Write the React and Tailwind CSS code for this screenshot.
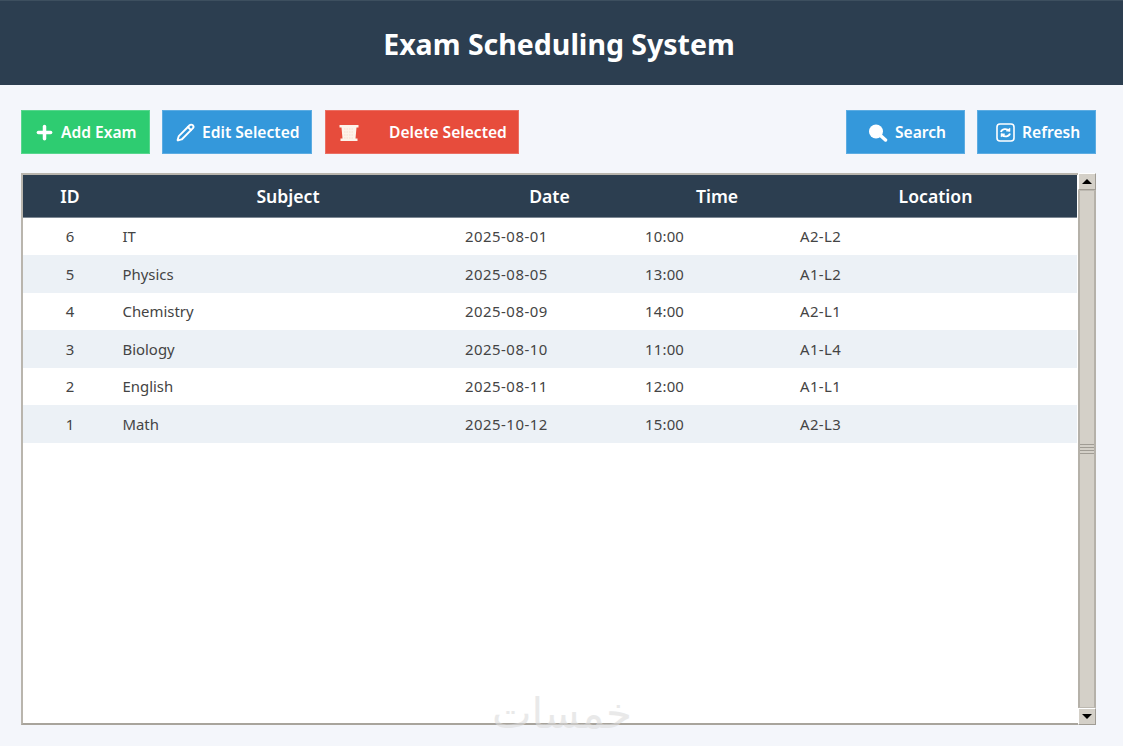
import { Pencil, Plus } from 'lucide-react';

const exams = [
  { id: 6, subject: 'IT', date: '2025-08-01', time: '10:00', location: 'A2-L2' },
  { id: 5, subject: 'Physics', date: '2025-08-05', time: '13:00', location: 'A1-L2' },
  { id: 4, subject: 'Chemistry', date: '2025-08-09', time: '14:00', location: 'A2-L1' },
  { id: 3, subject: 'Biology', date: '2025-08-10', time: '11:00', location: 'A1-L4' },
  { id: 2, subject: 'English', date: '2025-08-11', time: '12:00', location: 'A1-L1' },
  { id: 1, subject: 'Math', date: '2025-10-12', time: '15:00', location: 'A2-L3' },
];

const columns = 'grid grid-cols-[94px_342px_181px_154px_283px]';

function TrashIcon() {
  return (
    <svg width="20" height="18" viewBox="0 0 20 18" fill="#fdf3ea">
      <path d="M0.500 1h19v2.500h-2l-1 11h2v2.500H1.500v-2.500h2l-1-11h-2z" />
      <path d="M5 5h10M5 8h10M5 11h10M5 14h10" stroke="#f6d3c4" strokeWidth="0.700" strokeDasharray="1.500 1" />
    </svg>
  );
}

function SearchIcon() {
  return (
    <svg width="19" height="18" viewBox="0 0 19 18" fill="white">
      <circle cx="7" cy="7.500" r="7" />
      <path d="M11.500 11.500l5 4.500" stroke="white" strokeWidth="3.500" strokeLinecap="round" />
    </svg>
  );
}

function RefreshIcon() {
  return (
    <svg width="19" height="19" viewBox="0 0 19 19" fill="none" stroke="white">
      <rect x="1" y="1" width="17" height="17" rx="3" strokeWidth="1.600" />
      <path d="M5 9a4.500 3.500 0 0 1 8-1.500M14 10.500a4.500 3.500 0 0 1-8 1.500" strokeWidth="1.800" />
      <path d="M10 8l4 0.500 0-3.500zM9 11l-4-0.500 0 3.500z" fill="white" strokeWidth="0.500" />
    </svg>
  );
}

function ToolButton({ className, children }) {
  return (
    <button
      type="button"
      className={`flex h-11 items-center text-white text-[15.600px] font-semibold leading-none border border-white/20 ${className}`}
    >
      {children}
    </button>
  );
}

function ScrollArrow({ down }) {
  return (
    <div className="h-[17px] shrink-0 bg-[#d4d0c8] border border-t-white border-l-white border-r-[#a09c94] border-b-[#a09c94] flex items-center justify-center">
      <div
        className={
          down
            ? 'w-0 h-0 border-x-[5px] border-x-transparent border-t-[5px] border-t-black'
            : 'w-0 h-0 border-x-[5px] border-x-transparent border-b-[5px] border-b-black'
        }
      />
    </div>
  );
}

export default function App() {
  return (
    <div className="relative h-[746px] w-[1123px] overflow-hidden bg-[#f4f6fb] font-['Noto_Sans',sans-serif]">
      <header className="h-[85px] bg-[#2c3e50] flex items-center justify-center border-t border-[#3d4f5f]">
        <h1 className="text-white text-[28.500px] font-bold mt-[2px] ml-[-5px]">Exam Scheduling System</h1>
      </header>

      <div className="px-[21px] pt-[25px]">
        <div className="flex items-center gap-3 pr-[6px]">
          <ToolButton className="w-[129px] bg-[#2ecc71] pl-[12px] pt-px gap-[6px]">
            <Plus size={21} strokeWidth={4} />
            Add Exam
          </ToolButton>
          <ToolButton className="w-[150px] bg-[#3498db] pl-[13px] pt-px gap-[7px]">
            <Pencil size={19} strokeWidth={2.400} />
            Edit Selected
          </ToolButton>
          <ToolButton className="ml-px w-[194px] bg-[#e74c3c] pl-[13px] pt-px gap-[30px]">
            <TrashIcon />
            Delete Selected
          </ToolButton>
          <div className="flex-1" />
          <ToolButton className="w-[119px] bg-[#3498db] pl-[22px] pt-px gap-[7px]">
            <SearchIcon />
            Search
          </ToolButton>
          <ToolButton className="w-[119px] bg-[#3498db] pl-[18px] pt-px gap-[7px]">
            <RefreshIcon />
            Refresh
          </ToolButton>
        </div>

        <div className="mt-[19px] flex h-[552px] w-[1075px]">
          <div className="w-[1057px] border-2 border-[#b9b5ad] border-r-0 border-b-[#a8a49c] bg-white">
            <div className="w-[1054px]">
              <div className={`${columns} h-[42.500px] items-center bg-[#2c3e50] text-white text-[17.600px] font-semibold border-b border-[#7d8894]`}>
                <div className="text-center">ID</div>
                <div className="text-center">Subject</div>
                <div className="text-center">Date</div>
                <div className="text-center">Time</div>
                <div className="text-center">Location</div>
              </div>
              {exams.map((exam, index) => (
                <div
                  key={exam.id}
                  className={`${columns} h-[37.500px] items-center text-[#444444] text-[14.900px] ${index % 2 === 1 ? 'bg-[#ecf1f6]' : 'bg-white'}`}
                >
                  <div className="text-center">{exam.id}</div>
                  <div className="pl-[5.500px]">{exam.subject}</div>
                  <div className="pl-[6px] tracking-[0.5px]">{exam.date}</div>
                  <div className="pl-[5px] tracking-[0.2px]">{exam.time}</div>
                  <div className="pl-[6px] tracking-[0.4px]">{exam.location}</div>
                </div>
              ))}
            </div>
          </div>

          <div className="w-[18px] flex flex-col bg-[#d4d0c8]">
            <ScrollArrow />
            <div className="flex-1 bg-[#d4d0c8] border-x-2 border-x-[#b5b1a9] border-y border-y-[#bdb9b1] flex items-center justify-center">
              <div className="flex flex-col gap-[2px] w-full">
                <div className="h-px bg-[#a09c94]" />
                <div className="h-px bg-[#a09c94]" />
                <div className="h-px bg-[#a09c94]" />
                <div className="h-px bg-[#a09c94]" />
              </div>
            </div>
            <ScrollArrow down />
          </div>
        </div>
      </div>

      <div className="absolute left-[492px] top-[693px] text-[42px] leading-none text-[#dcdcdc] opacity-60 font-['DejaVu_Sans',sans-serif]">
        خمسات
      </div>
    </div>
  );
}
